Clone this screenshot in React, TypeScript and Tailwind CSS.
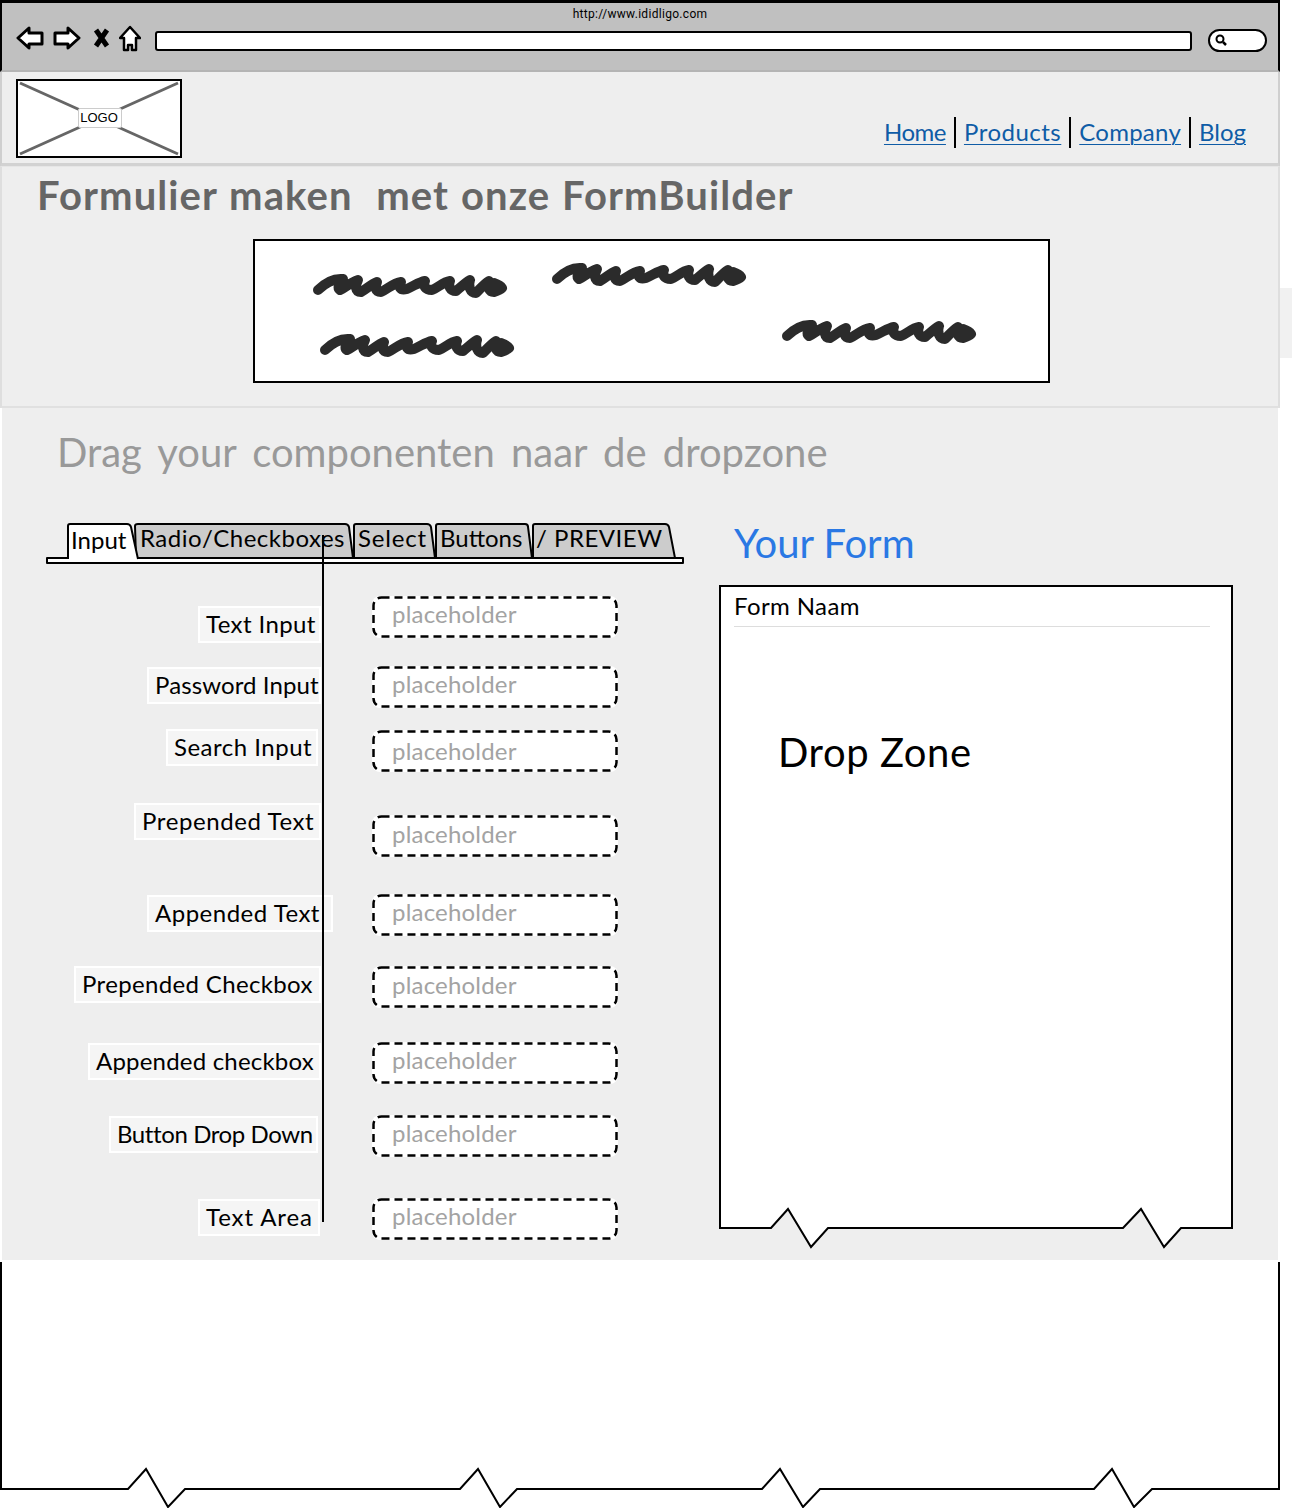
const font = "font-['Lato','Liberation_Sans',sans-serif]";

const fields = [
  { label: "Text Input", row: "mt-[32px]", pos: "mt-[10px] mr-[51px] w-[123px] tracking-[0.4px]", ph: "" },
  { label: "Password Input", row: "mt-[29px]", pos: "mt-[1px] mr-[51px] w-[174px] tracking-[0.1px]", ph: "" },
  { label: "Search Input", row: "mt-[23px]", pos: "-mt-[1px] mr-[54px] w-[152px] tracking-[0.5px]", ph: "pt-[6px]" },
  { label: "Prepended Text", row: "mt-[44px]", pos: "-mt-[12px] mr-[51px] w-[187px] tracking-[0.6px]", ph: "pt-[4px]" },
  { label: "Appended Text", row: "mt-[38px]", pos: "mt-[1px] mr-[39px] w-[186px] tracking-[0.5px]", ph: "" },
  { label: "Prepended Checkbox", row: "mt-[31px]", pos: "mr-[51px] w-[247px] tracking-[0.35px]", ph: "pt-[4px]" },
  { label: "Appended checkbox", row: "mt-[35px]", pos: "mt-[1px] mr-[51px] w-[233px] tracking-[0.2px]", ph: "" },
  { label: "Button Drop Down", row: "mt-[32px]", pos: "mt-[1px] mr-[54px] w-[209px] -tracking-[0.4px]", ph: "" },
  { label: "Text Area", row: "mt-[42px]", pos: "mt-[1px] mr-[52px] w-[122px] tracking-[0.9px]", ph: "" },
];

const tabs = [
  { label: "Input", w: 68, width: "w-[68px] z-10", active: true, path: "M1 36V3Q1 1 3 1H60Q63 1 64 4L71 36", text: "pl-[4px] pt-[1px]" },
  { label: "Radio/Checkboxes", w: 218, width: "w-[218px]", active: false, path: "M1 35L0 3Q0 1 3 1H210Q213 1 214 4L218 35Z", text: "pl-[5px] -mt-[1px] tracking-[0.5px]" },
  { label: "Select", w: 82, width: "w-[82px]", active: false, path: "M1 35V3Q1 1 3 1H74Q77 1 78 4L82 35Z", text: "pl-[5px] -mt-[1px] tracking-[0.8px]" },
  { label: "Buttons", w: 97, width: "w-[97px]", active: false, path: "M1 35V3Q1 1 3 1H90Q93 1 93 4L97 35Z", text: "pl-[5px] -mt-[1px]" },
  { label: "/ PREVIEW", w: 143, width: "w-[143px]", active: false, path: "M1 35V3Q1 1 3 1H133Q136 1 137 4L143 35Z", text: "pl-[4px] -mt-[1px] tracking-[0.5px]" },
];

const links = [
  { label: "Home", track: "-tracking-[0.5px]" },
  { label: "Products", track: "tracking-[0.5px]" },
  { label: "Company", track: "tracking-[0.25px]" },
  { label: "Blog", track: "" },
];

function Scribble({ x, y }: { x: number; y: number }) {
  return (
    <path
      transform={`translate(${x} ${y})`}
      d="M5 20C12 13 20 8 30 9C26 14 24 18 27 20C33 17 38 12 45 10C42 16 42 22 48 22C54 19 58 14 64 12C62 18 62 22 68 22C75 19 80 13 88 12C85 17 87 21 94 19C101 16 106 12 112 11C110 16 112 20 119 20C126 17 130 12 137 11C135 16 137 21 143 21C148 17 152 13 157 10C155 16 157 23 163 23C168 18 171 14 176 11C174 17 176 22 181 22C184 21 187 20 189 18C187 15 184 14 181 13"
      fill="none"
      stroke="#2b2b2b"
      strokeWidth="10"
      strokeLinecap="round"
      strokeLinejoin="round"
    />
  );
}

function Jag({ className, d, box }: { className: string; d: string; box: string }) {
  return (
    <svg className={className} viewBox={box}>
      <path d={d} fill="#fff" stroke="#000" strokeWidth="2" />
    </svg>
  );
}

function Toolbar() {
  return (
    <div className="h-[72px] bg-[#c0c0c0] border-t-[3px] border-x-2 border-black border-b-2 border-b-[#b4b4b4]">
      <div className="h-[21px] pt-[1px] text-center text-[12px] leading-[20px] tracking-[0.3px] text-black font-['Roboto','Liberation_Sans',sans-serif]">
        http://www.ididligo.com
      </div>
      <div className="flex items-center pl-[14px] h-[28px]">
        <svg className="w-[28px] h-[24px]" viewBox="0 0 28 24">
          <path d="M2 12L13 2V7H26V18H13V22Z" fill="#fff" stroke="#000" strokeWidth="3" strokeLinejoin="round" />
        </svg>
        <svg className="ml-[9px] w-[28px] h-[24px]" viewBox="0 0 28 24">
          <path d="M26 12L15 2V7H2V18H15V22Z" fill="#fff" stroke="#000" strokeWidth="3" strokeLinejoin="round" />
        </svg>
        <svg className="ml-[12px] w-[17px] h-[20px]" viewBox="0 0 17 20">
          <path d="M3 2L14 18M14 2L3 18" fill="none" stroke="#000" strokeWidth="5" />
        </svg>
        <svg className="ml-[9px] w-[22px] h-[27px]" viewBox="0 0 22 27">
          <path d="M11 2L21 13H17V25H13V20H9V25H5V13H1Z" fill="#fff" stroke="#000" strokeWidth="2.5" strokeLinejoin="round" />
        </svg>
        <div className="ml-[14px] w-[1037px] h-[20px] mt-[6px] bg-white border-2 border-black rounded-[3px]" />
        <div className="ml-[16px] w-[59px] h-[23px] mt-[4px] bg-white border-2 border-black rounded-full pl-[5px] flex items-center">
          <svg className="w-[12px] h-[12px]" viewBox="0 0 12 12">
            <circle cx="5" cy="5" r="3.5" fill="none" stroke="#000" strokeWidth="2" />
            <path d="M8 8L11 11" stroke="#000" strokeWidth="2.5" />
          </svg>
        </div>
      </div>
    </div>
  );
}

function Header() {
  return (
    <div className="h-[94px] bg-[#eeeeee] border-x-2 border-[#cfcfcf] border-b-[3px] border-b-[#d2d2d2] flex justify-between pl-[14px] pr-[32px] pt-[7px]">
      <div className="relative w-[166px] h-[79px] bg-white border-2 border-black">
        <svg className="absolute inset-0 w-full h-full" viewBox="0 0 162 75">
          <path d="M2 2L160 73M160 2L2 73" stroke="#666" strokeWidth="3" />
        </svg>
        <div className="absolute left-[60px] top-[27px] w-[44px] h-[20px] bg-white border border-[#cccccc] rounded-[2px] text-center text-[13px] leading-[18px] text-black pr-[2px] font-['Liberation_Sans',sans-serif]">
          LOGO
        </div>
      </div>
      <nav className={`flex items-center h-[32px] mt-[37px] text-[24px] text-[#0f5ca6] ${font}`}>
        {links.map((link, i) => (
          <div key={link.label} className="flex items-center">
            {i > 0 && <span className="w-[2px] h-[31px] mx-[8px] bg-black" />}
            <a className={`underline underline-offset-[3px] decoration-1 ${link.track}`}>{link.label}</a>
          </div>
        ))}
      </nav>
    </div>
  );
}

function Hero() {
  return (
    <div className="h-[242px] bg-[#eeeeee] border-x-2 border-[#dedede] border-b-2 border-b-[#e0e0e0] border-t border-t-[#e6e6e6]">
      <h1 className={`pl-[35px] pt-[6px] h-[72px] text-[40px] leading-[44px] font-bold tracking-[1.1px] [word-spacing:1px] text-[#666666] whitespace-pre ${font}`}>
        Formulier maken  met onze FormBuilder
      </h1>
      <div className="ml-[251px] w-[797px] h-[144px] bg-white border-2 border-black">
        <svg className="w-full h-full" viewBox="0 0 793 140">
          <Scribble x={58} y={29} />
          <Scribble x={297} y={18} />
          <Scribble x={65} y={89} />
          <Scribble x={527} y={75} />
        </svg>
      </div>
    </div>
  );
}

function Tabs() {
  return (
    <div className="relative">
      <div className="relative z-10 flex pl-[21px] h-[36px] -mb-[2px]">
        {tabs.map((tab) => (
          <div key={tab.label} className={`relative shrink-0 h-[36px] ${tab.width}`}>
            <svg className="absolute inset-0 w-full h-full overflow-visible" viewBox={`0 0 ${tab.w} 36`}>
              <path d={tab.path} fill={tab.active ? "#fff" : "#cccccc"} stroke="#000" strokeWidth="2" />
            </svg>
            <span className={`relative block text-[24px] leading-[32px] text-black whitespace-nowrap ${tab.text} ${font}`}>
              {tab.label}
            </span>
          </div>
        ))}
      </div>
      <div className="h-[7px] bg-white border-2 border-black rounded-[1px]" />
    </div>
  );
}

function Fields() {
  return (
    <div>
      {fields.map((field) => (
        <div key={field.label} className={`flex items-start h-[41px] ${field.row}`}>
          <div className="w-[326px] shrink-0 flex justify-end">
            <div className={`h-[37px] shrink-0 bg-[#f5f5f5] border-2 border-white pl-[6px] pb-[2px] flex items-center text-[24px] text-black whitespace-nowrap ${font} ${field.pos}`}>
              {field.label}
            </div>
          </div>
          <div className={`relative w-[246px] h-[42px] shrink-0 bg-white rounded-[8px] pl-[20px] pt-[3px] text-[24px] leading-[30px] tracking-[0.2px] text-[#a3a3a3] ${font} ${field.ph}`}>
            <svg className="absolute inset-0 w-full h-full" viewBox="0 0 246 42">
              <rect x="1.5" y="1.5" width="243" height="39" rx="8" fill="none" stroke="#000" strokeWidth="2.5" strokeDasharray="8 5" />
            </svg>
            placeholder
          </div>
        </div>
      ))}
    </div>
  );
}

function FormPanel() {
  return (
    <div className="ml-[35px] w-[514px]">
      <h2 className={`ml-[15px] -mt-[2px] h-[64px] text-[40px] leading-[44px] text-[#2a78e4] ${font}`}>Your Form</h2>
      <div className="relative h-[664px]">
        <Jag
          className="absolute inset-0 w-full h-full"
          box="0 0 514 664"
          d="M1 1H513V643H462L445 662L422 624L404 643H109L92 662L69 624L52 643H1Z"
        />
        <div className="relative px-[15px] pt-[7px]">
          <div className={`h-[35px] w-[476px] border-b border-[#dddddd] text-[24px] leading-[28px] tracking-[0.4px] text-black ${font}`}>Form Naam</div>
          <div className={`ml-[44px] mt-[103px] text-[40px] leading-[44px] tracking-[0.6px] text-black ${font}`}>Drop Zone</div>
        </div>
      </div>
    </div>
  );
}

function Main() {
  return (
    <div className="relative h-[852px] bg-[#eeeeee] mx-[2px]">
      <h2 className={`pl-[55px] pt-[22px] h-[115px] text-[40px] leading-[44px] [word-spacing:6px] text-[#999999] ${font}`}>
        Drag your componenten naar de dropzone
      </h2>
      <div className="flex pl-[44px]">
        <div className="w-[638px] shrink-0">
          <Tabs />
          <Fields />
        </div>
        <FormPanel />
      </div>
      <div className="absolute left-[320px] top-[127px] w-[2px] h-[687px] bg-black z-20" />
    </div>
  );
}

export default function App() {
  return (
    <div className="relative w-[1292px] h-[1508px] bg-white overflow-hidden">
      <div className="w-[1280px]">
        <Toolbar />
        <Header />
        <Hero />
        <Main />
        <div className="relative h-[248px]">
          <Jag
            className="absolute inset-0 w-full h-full"
            box="0 0 1280 248"
            d="M1 2V229H128L146 209L168 247L185 229H460L478 209L500 247L517 229H762L780 209L803 247L820 229H1094L1112 209L1134 247L1152 229H1279V2"
          />
        </div>
      </div>
      <div className="absolute left-[1280px] top-[288px] w-[12px] h-[70px] bg-[#f1f1f1]" />
    </div>
  );
}
